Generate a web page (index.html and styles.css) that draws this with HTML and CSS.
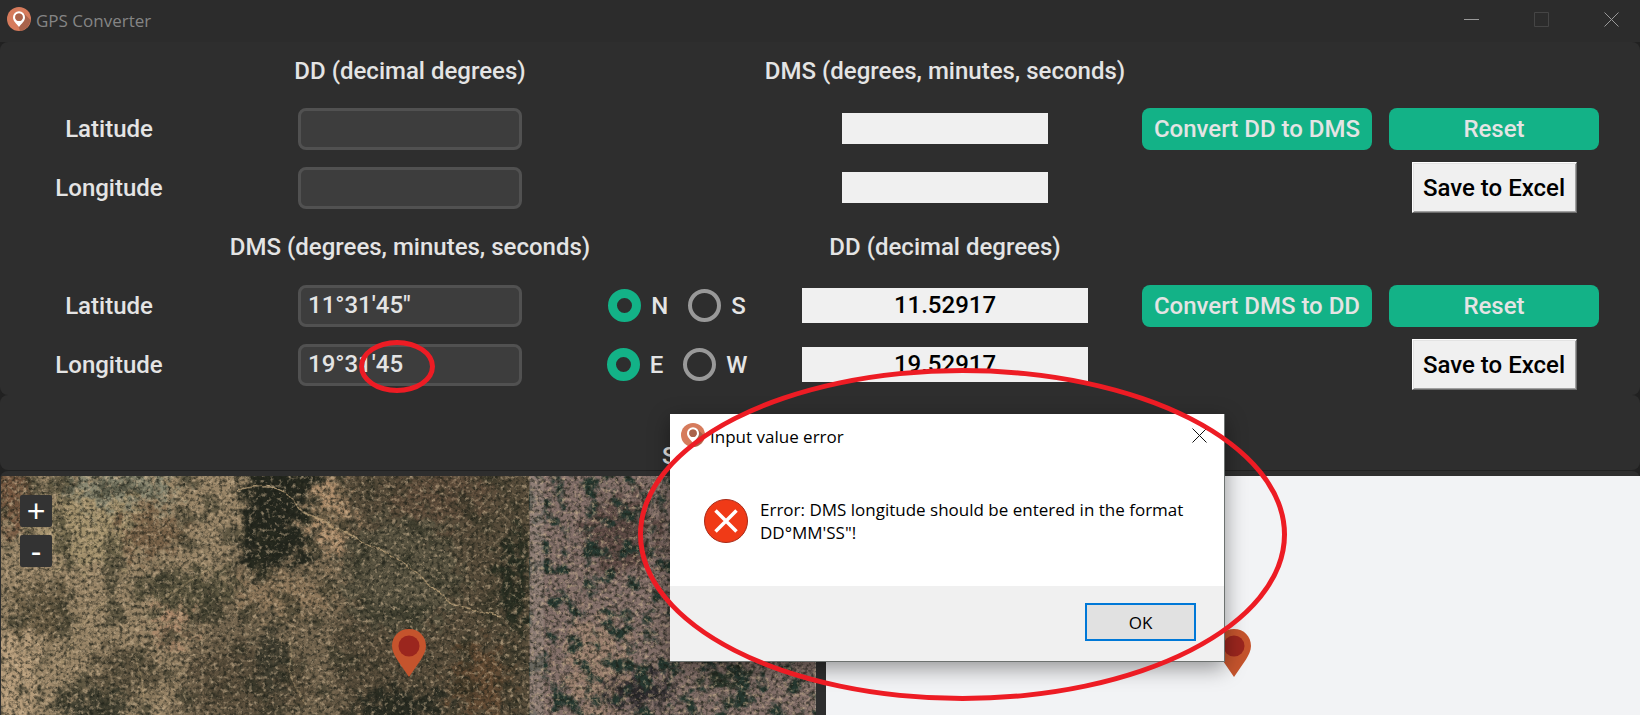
FILE: index.html
```
<!DOCTYPE html>
<html lang="en">
<head>
<meta charset="utf-8">
<title>GPS Converter</title>
<link rel="stylesheet" href="styles.css">
</head>
<body>
<svg class="defs" aria-hidden="true">
  <symbol id="app-icon" viewBox="0 0 24 24">
    <circle cx="12" cy="12" r="12" fill="#d67b5c"/>
    <path d="M17 6.500L23.500 13A12 12 0 0 1 13 23.900L11 18z" fill="#a9634c"/>
    <path fill-rule="evenodd" d="M12 4.200a6 6 0 0 0-6 6c0 4 3.500 6.300 6 9.800 2.500-3.500 6-5.800 6-9.800a6 6 0 0 0-6-6zm0 2.300a3.700 3.700 0 1 1 0 7.400 3.700 3.700 0 0 1 0-7.400z" fill="#fff"/>
    <circle cx="12" cy="10.200" r="3.700" fill="#a9634c"/>
  </symbol>
  <symbol id="pin" viewBox="0 0 34 48">
    <path d="M17 0C7 0 0 7.500 0 17c0 5 2.500 9 5 13.500L17 48l12-17.500C31.500 26 34 22 34 17 34 7.500 27 0 17 0z" fill="#c5542d"/>
    <circle cx="17" cy="17" r="10.500" fill="#9b261e"/>
  </symbol>
</svg>

<header class="titlebar">
  <svg class="app-icon"><use href="#app-icon"/></svg>
  <h1 class="app-title">GPS Converter</h1>
  <div class="window-controls">
    <button type="button" aria-label="Minimize"><svg viewBox="0 0 15 15"><path d="M0 7.500h15"/></svg></button>
    <button type="button" aria-label="Maximize" class="disabled" disabled><svg viewBox="0 0 15 15"><path d="M.5.500h14v14H.5z"/></svg></button>
    <button type="button" aria-label="Close"><svg viewBox="0 0 15 15"><path d="M.5.500l14 14M14.500.500l-14 14"/></svg></button>
  </div>
</header>

<form class="panel converter">
  <h2 class="col-input">DD (decimal degrees)</h2>
  <h2 class="col-output">DMS (degrees, minutes, seconds)</h2>

  <label for="dd-lat" class="col-label">Latitude</label>
  <input id="dd-lat" class="field" type="text">
  <output class="result small" for="dd-lat"></output>
  <button type="button" class="btn convert">Convert DD to DMS</button>
  <button type="button" class="btn reset">Reset</button>

  <label for="dd-lon" class="col-label">Longitude</label>
  <input id="dd-lon" class="field" type="text">
  <output class="result small" for="dd-lon"></output>
  <button type="button" class="save">Save to Excel</button>

  <h2 class="col-input">DMS (degrees, minutes, seconds)</h2>
  <h2 class="col-output">DD (decimal degrees)</h2>

  <label for="dms-lat" class="col-label">Latitude</label>
  <input id="dms-lat" class="field" type="text" value="11°31'45&quot;">
  <div class="radios">
    <label><input type="radio" name="ns" checked>N</label>
    <label><input type="radio" name="ns">S</label>
  </div>
  <output class="result" for="dms-lat">11.52917</output>
  <button type="button" class="btn convert">Convert DMS to DD</button>
  <button type="button" class="btn reset">Reset</button>

  <label for="dms-lon" class="col-label">Longitude</label>
  <input id="dms-lon" class="field" type="text" value="19°31'45">
  <div class="radios">
    <label><input type="radio" name="ew" checked>E</label>
    <label><input type="radio" name="ew">W</label>
  </div>
  <output class="result" for="dms-lon">19.52917</output>
  <button type="button" class="save">Save to Excel</button>
</form>

<section class="panel status"><p>S</p></section>

<main class="maps">
  <section class="map satellite">
    <svg class="imagery" viewBox="0 0 815 240" preserveAspectRatio="xMinYMin slice" aria-hidden="true">
      <defs>
        <filter id="rough" x="-10%" y="-10%" width="120%" height="120%" color-interpolation-filters="sRGB">
          <feGaussianBlur stdDeviation="6" result="b"/>
          <feTurbulence type="fractalNoise" baseFrequency="0.09" numOctaves="5" seed="4" result="n"/>
          <feDisplacementMap in="b" in2="n" scale="60" xChannelSelector="R" yChannelSelector="G"/>
        </filter>
        <filter id="road" x="-10%" y="-10%" width="120%" height="120%">
          <feTurbulence type="fractalNoise" baseFrequency="0.08" numOctaves="2" seed="8" result="n"/>
          <feDisplacementMap in="SourceGraphic" in2="n" scale="6" xChannelSelector="R" yChannelSelector="G"/>
          <feGaussianBlur stdDeviation=".5"/>
        </filter>
        <filter id="dark" x="0" y="0" width="100%" height="100%" color-interpolation-filters="sRGB">
          <feTurbulence type="fractalNoise" baseFrequency="0.27" numOctaves="4" seed="11"/>
          <feColorMatrix values="0 0 0 0 .11  0 0 0 0 .12  0 0 0 0 .09  2.600 0 0 0 -1.100"/>
        </filter>
        <filter id="light" x="0" y="0" width="100%" height="100%" color-interpolation-filters="sRGB">
          <feTurbulence type="fractalNoise" baseFrequency="0.23" numOctaves="4" seed="25"/>
          <feColorMatrix values="0 0 0 0 .84  0 0 0 0 .74  0 0 0 0 .6  0 3.200 0 0 -1.700"/>
        </filter>
        <filter id="scrub" x="0" y="0" width="100%" height="100%" color-interpolation-filters="sRGB">
          <feTurbulence type="fractalNoise" baseFrequency="0.04" numOctaves="6" seed="6"/>
          <feColorMatrix values="0 0 0 0 .17  0 0 0 0 .18  0 0 0 0 .13  7 0 0 0 -3.800"/>
        </filter>
        <filter id="bushes" x="0" y="0" width="100%" height="100%" color-interpolation-filters="sRGB">
          <feTurbulence type="fractalNoise" baseFrequency="0.06" numOctaves="6" seed="31"/>
          <feColorMatrix values="0 0 0 0 .15  0 0 0 0 .22  0 0 0 0 .19  6 0 0 0 -3.100"/>
        </filter>
      </defs>
      <rect width="815" height="240" fill="#75664f"/>
      <g filter="url(#rough)">
        <path d="M-20-20H240V90L200 130 170 260H-20z" fill="#998567"/>
        <ellipse cx="90" cy="50" rx="55" ry="40" fill="#a4926d"/>
        <ellipse cx="120" cy="10" rx="60" ry="18" fill="#898872"/>
        <ellipse cx="8" cy="25" rx="18" ry="35" fill="#74563f"/>
        <ellipse cx="150" cy="58" rx="32" ry="22" fill="#796248"/>
        <ellipse cx="12" cy="200" rx="24" ry="50" fill="#b79d7b"/>
        <ellipse cx="40" cy="135" rx="30" ry="26" fill="#6a5d45"/>
        <ellipse cx="170" cy="152" rx="18" ry="18" fill="#ac886a"/>
        <ellipse cx="185" cy="115" rx="55" ry="20" fill="#5b553f"/>
        <ellipse cx="130" cy="195" rx="38" ry="25" fill="#625742"/>
        <ellipse cx="90" cy="235" rx="40" ry="18" fill="#403f30"/>
        <ellipse cx="250" cy="205" rx="60" ry="40" fill="#5c503d"/>
        <ellipse cx="270" cy="185" rx="14" ry="35" fill="#403e30"/>
        <path d="M340-20H540V260H340z" fill="#574c3a"/>
        <ellipse cx="400" cy="100" rx="60" ry="60" fill="#5b5542"/>
        <ellipse cx="440" cy="20" rx="50" ry="25" fill="#604e3c"/>
        <ellipse cx="330" cy="38" rx="17" ry="40" fill="#b4926f"/>
        <ellipse cx="285" cy="120" rx="50" ry="20" fill="#8f785b"/>
        <path d="M240-20H318L300 40 312 80 280 92 260 100 248 85 230 78 244 55z" fill="#24271e"/>
        <ellipse cx="515" cy="105" rx="13" ry="55" fill="#252c20"/>
        <ellipse cx="480" cy="205" rx="28" ry="35" fill="#624a33"/>
        <ellipse cx="400" cy="230" rx="45" ry="16" fill="#292c22"/>
      </g>
      <rect width="529" height="240" filter="url(#scrub)" opacity=".5"/>
      <g filter="url(#road)" fill="none" stroke="#baa078">
        <path d="M236 14Q265 6 285 16L300 34Q330 50 350 60C370 75 395 76 410 92L450 128 500 140" stroke-width="1.500" opacity=".85"/>
        <path d="M120 110L80 150 60 190M160 0L185 24M290 165V200L305 230M135 180L145 230M212 90L150 130" stroke-width="2" opacity=".4"/>
      </g>
      <rect x="529" width="286" height="240" fill="#84706a"/>
      <g filter="url(#rough)">
        <ellipse cx="620" cy="60" rx="36" ry="38" fill="#5f4b46"/>
        <ellipse cx="595" cy="190" rx="30" ry="50" fill="#9b806f"/>
        <ellipse cx="640" cy="215" rx="34" ry="16" fill="#29272b"/>
        <ellipse cx="725" cy="205" rx="24" ry="14" fill="#283429"/>
      </g>
      <rect x="529" width="286" height="240" filter="url(#bushes)"/>
      <rect x="529" width="14" height="240" fill="#96877e" opacity=".6"/>
      <rect width="815" height="240" filter="url(#dark)" opacity=".75"/>
      <rect width="815" height="240" filter="url(#light)" opacity=".6"/>
    </svg>
    <div class="zoom">
      <button type="button" aria-label="Zoom in">+</button>
      <button type="button" aria-label="Zoom out">-</button>
    </div>
    <svg class="pin"><use href="#pin"/></svg>
  </section>
  <section class="map">
    <svg class="pin"><use href="#pin"/></svg>
  </section>
</main>

<div class="dialog" role="alertdialog" aria-labelledby="dlg-title" aria-describedby="dlg-text">
  <div class="dialog-title">
    <svg class="app-icon"><use href="#app-icon"/></svg>
    <h2 id="dlg-title">Input value error</h2>
    <button type="button" class="dialog-close" aria-label="Close"><svg viewBox="0 0 15 15"><path d="M.5.500l14 14M14.500.500l-14 14"/></svg></button>
  </div>
  <div class="dialog-body">
    <svg class="error-icon" viewBox="0 0 44 44"><circle cx="22" cy="22" r="21.500" fill="#f03a17" stroke="#a82a18"/><path d="M11.500 11.500l21 21M32.500 11.500l-21 21" stroke="#fff" stroke-width="3.500"/></svg>
    <p id="dlg-text">Error: DMS longitude should be entered in the format DD°MM'SS"!</p>
  </div>
  <div class="dialog-footer"><button type="button" class="ok">OK</button></div>
</div>

<div class="mark mark-field"></div>
<div class="mark mark-dialog"></div>
</body>
</html>
```
FILE: styles.css
```
* { box-sizing: border-box; }
body {
  margin: 0;
  min-height: 100vh;
  display: flex;
  flex-direction: column;
  position: relative;
  overflow: hidden;
  background: #212121;
  color: #e4e4e4;
  font: 500 24px/28px Roboto, "Liberation Sans", sans-serif;
}
h1, h2, p { margin: 0; font: inherit; }
button, input { font: inherit; color: inherit; }
button { padding: 0; border: 0; background: none; }
.defs { position: absolute; width: 0; height: 0; }

.titlebar {
  display: flex;
  align-items: center;
  height: 42px;
  padding: 0 21px 4px 7px;
  background: #2c2c2c;
}
.app-icon { width: 24px; height: 24px; flex: none; }
.app-title {
  margin-left: 5px;
  padding-top: 3px;
  color: #858585;
  font: 400 17px/24px "Open Sans", sans-serif;
}
.window-controls { display: flex; gap: 55px; margin-left: auto; }
.window-controls svg, .dialog-close svg {
  display: block;
  width: 15px;
  height: 15px;
  fill: none;
  stroke: #999;
}
.window-controls .disabled svg { stroke: #454545; }

.panel { background: #2e2e2e; border-radius: 8px; }
.converter {
  display: grid;
  grid-template-columns: 218fr 384fr 150fr 386fr 238fr 236fr;
  grid-template-rows: 57px;
  grid-auto-rows: 59px;
  align-items: center;
  justify-items: center;
  padding: 0 28px 1px 0;
}
.col-label { grid-column: 1; }
.col-input, .field { grid-column: 2; }
.radios { grid-column: 3; }
.col-output, .result { grid-column: 4; }
.convert { grid-column: 5; }
.reset, .save { grid-column: 6; }
.converter h2 { white-space: nowrap; }

.field {
  width: 224px;
  height: 42px;
  padding: 0 7px 2px;
  border: 3px solid #515151;
  border-radius: 8px;
  background: #3d3d3d;
}
.result {
  width: 286px;
  height: 35px;
  line-height: 35px;
  text-align: center;
  background: #f0f0f0;
  color: #000;
}
.result.small { width: 206px; height: 31px; }
.btn {
  height: 42px;
  border-radius: 8px;
  background: #13b287;
  white-space: nowrap;
}
.convert { width: 230px; }
.reset { width: 210px; }
.save {
  width: 165px;
  height: 51px;
  border: 1px solid #fff;
  border-right-color: #6d6d6d;
  border-bottom-color: #6d6d6d;
  box-shadow: inset 1px 1px #e3e3e3, inset -1px -1px #a0a0a0;
  background: #f0f0f0;
  color: #000;
}
.radios { display: flex; gap: 20px; }
.radios label { display: flex; align-items: center; gap: 10px; }
.radios input {
  appearance: none;
  width: 33px;
  height: 33px;
  margin: 0;
  border: 4px solid #999;
  border-radius: 50%;
}
.radios input:checked { border: 9px solid #13b287; }

.status {
  height: 75px;
  margin-bottom: 1px;
  padding: 47px 0 0 662px;
  line-height: 28px;
}

.maps {
  flex: 1;
  display: grid;
  grid-template-columns: 1fr 1fr;
  gap: 10px;
  padding: 5px 0 0 1px;
  background: #2e2e2e;
  border-radius: 8px 8px 0 0;
}
.map { position: relative; overflow: hidden; background: #f2f3f5; }
.imagery { position: absolute; inset: 0; width: 100%; height: 100%; }
.pin {
  position: absolute;
  left: 50%;
  top: 153px;
  width: 34px;
  height: 48px;
  margin-left: -16px;
}
.zoom {
  position: relative;
  display: flex;
  flex-direction: column;
  gap: 8px;
  width: 32px;
  margin: 19px;
}
.zoom button {
  height: 32px;
  border-radius: 2px;
  background: #333;
  color: #fff;
  font: 400 32px/32px "Liberation Sans", sans-serif;
}

.dialog {
  position: absolute;
  left: 670px;
  top: 414px;
  width: 555px;
  background: #fff;
  color: #000;
  font: 400 17px/23px "Open Sans", sans-serif;
  border-right: 1px solid #6d7270;
  border-bottom: 1px solid #6d7270;
  box-shadow: 0 6px 20px rgba(0, 0, 0, .4);
}
.dialog-title { display: flex; align-items: center; height: 42px; padding: 0 17px 0 11px; }
.dialog-title h2 { margin-left: 5px; padding-top: 3px; }
.dialog-close { margin-left: auto; }
.dialog-close svg { stroke: #111; }
.dialog-body {
  display: flex;
  align-items: center;
  gap: 12px;
  height: 130px;
  padding: 0 30px 0 34px;
}
.error-icon { flex: none; width: 44px; height: 44px; }
.dialog-footer {
  display: flex;
  justify-content: flex-end;
  padding: 17px 28px 20px;
  background: #f0f0f0;
}
.ok {
  width: 111px;
  height: 38px;
  border: 2px solid #0078d7;
  background: #e1e1e1;
}

.mark {
  position: absolute;
  border: 5px solid #ed1c24;
  border-radius: 50%;
  pointer-events: none;
}
.mark-field { left: 359px; top: 340px; width: 76px; height: 53px; }
.mark-dialog { left: 638px; top: 368px; width: 649px; height: 333px; }
```
